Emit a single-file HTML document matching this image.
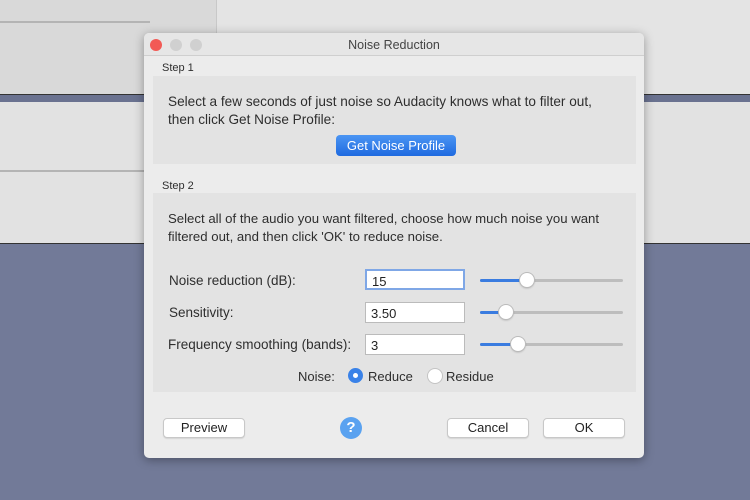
<!DOCTYPE html>
<html><head><style>
body{margin:0;width:750px;height:500px;overflow:hidden;position:relative;background:#727a98;font-family:"Liberation Sans",sans-serif;color:#333}
.a{position:absolute}
.lbl{font-size:13px;color:#2e2e2e}
.tb{position:absolute;left:365px;width:100px;height:21px;background:#fff;border:1px solid #bbb;box-sizing:border-box;font-size:13px;padding:3px 0 0 5px;color:#222}
.sl{position:absolute;left:480px;width:143px;height:3px;background:#bdbdbd;border-radius:2px}
.sl i{position:absolute;left:0;top:0;height:3px;background:#3a7ce0;border-radius:2px}
.sl b{position:absolute;top:-6px;width:14px;height:14px;border-radius:50%;background:#fff;box-shadow:0 0 0 1px #bbb,0 1px 2px rgba(0,0,0,.3)}
.btn{position:absolute;height:20px;background:#fff;border:1px solid #c8c8c8;border-radius:4px;box-sizing:border-box;font-size:13px;text-align:center;line-height:18px;color:#222;box-shadow:0 1px 1px rgba(0,0,0,.1)}
</style></head><body>
<div class="a" style="left:0;top:0;width:750px;height:94px;background:#e4e4e4"></div>
<div class="a" style="left:0;top:0;width:216px;height:94px;background:#d9d9d9;border-right:1px solid #c8c8c8"></div>
<div class="a" style="left:0;top:21px;width:150px;height:2px;background:#b4b4b4"></div>
<div class="a" style="left:0;top:94px;width:750px;height:7px;background:#6a7290;border-top:1px solid #333;border-bottom:1px solid #333"></div>
<div class="a" style="left:0;top:102px;width:750px;height:141px;background:#e2e2e2"></div>
<div class="a" style="left:0;top:170px;width:150px;height:2px;background:#b4b4b4"></div>
<div class="a" style="left:0;top:243px;width:750px;height:1px;background:#333"></div>

<div class="a" style="left:144px;top:33px;width:500px;height:425px;background:#ececec;border-radius:5px;box-shadow:0 2px 10px rgba(0,0,0,.35)"></div>
<div class="a" style="left:144px;top:33px;width:500px;height:22px;background:#e6e6e6;border-radius:5px 5px 0 0;border-bottom:1px solid #cfcfcf"></div>
<div class="a" style="left:150px;top:39px;width:12px;height:12px;border-radius:50%;background:#f25a55"></div>
<div class="a" style="left:170px;top:39px;width:12px;height:12px;border-radius:50%;background:#d0d0d0"></div>
<div class="a" style="left:190px;top:39px;width:12px;height:12px;border-radius:50%;background:#d0d0d0"></div>
<div class="a" style="left:144px;top:38px;width:500px;text-align:center;font-size:12.5px;color:#444">Noise Reduction</div>

<div class="a lbl" style="left:162px;top:62px;font-size:11px">Step 1</div>
<div class="a" style="left:153px;top:76px;width:483px;height:88px;background:#e3e3e3"></div>
<div class="a lbl" style="left:168px;top:93px;line-height:18px;font-size:13.6px">Select a few seconds of just noise so Audacity knows what to filter out,<br>then click Get Noise Profile:</div>
<div class="a" style="left:336px;top:135px;width:120px;height:21px;border-radius:4px;background:linear-gradient(#4b95f3,#1f6ae0);color:#fff;font-size:13px;text-align:center;line-height:21px">Get Noise Profile</div>

<div class="a lbl" style="left:162px;top:180px;font-size:11px">Step 2</div>
<div class="a" style="left:153px;top:193px;width:483px;height:199px;background:#e3e3e3"></div>
<div class="a lbl" style="left:168px;top:210px;line-height:18px;font-size:13.2px">Select all of the audio you want filtered, choose how much noise you want<br>filtered out, and then click 'OK' to reduce noise.</div>

<div class="a lbl" style="left:169px;top:273px;font-size:13.5px">Noise reduction (dB):</div>
<div class="tb" style="top:269px;border:2px solid #7fa7e6">15</div>
<div class="sl" style="top:279px"><i style="width:47px"></i><b style="left:40px"></b></div>

<div class="a lbl" style="left:169px;top:305px;font-size:13.5px">Sensitivity:</div>
<div class="tb" style="top:302px">3.50</div>
<div class="sl" style="top:311px"><i style="width:25px"></i><b style="left:19px"></b></div>

<div class="a lbl" style="left:168px;top:337px;font-size:13.5px">Frequency smoothing (bands):</div>
<div class="tb" style="top:334px">3</div>
<div class="sl" style="top:343px"><i style="width:37px"></i><b style="left:31px"></b></div>

<div class="a lbl" style="left:298px;top:369px">Noise:</div>
<div class="a" style="left:348px;top:368px;width:15px;height:15px;border-radius:50%;background:#3a82e8"><div class="a" style="left:5px;top:5px;width:5px;height:5px;border-radius:50%;background:#fff"></div></div>
<div class="a lbl" style="left:368px;top:369px">Reduce</div>
<div class="a" style="left:427px;top:368px;width:14px;height:14px;border-radius:50%;background:#fff;border:1px solid #c4c4c4"></div>
<div class="a lbl" style="left:446px;top:369px">Residue</div>

<div class="btn" style="left:163px;top:418px;width:82px">Preview</div>
<div class="a" style="left:340px;top:417px;width:22px;height:22px;border-radius:50%;background:#5aa2f0;color:#fff;font-weight:bold;font-size:15px;text-align:center;line-height:22px">?</div>
<div class="btn" style="left:447px;top:418px;width:82px">Cancel</div>
<div class="btn" style="left:543px;top:418px;width:82px">OK</div>
</body></html>
